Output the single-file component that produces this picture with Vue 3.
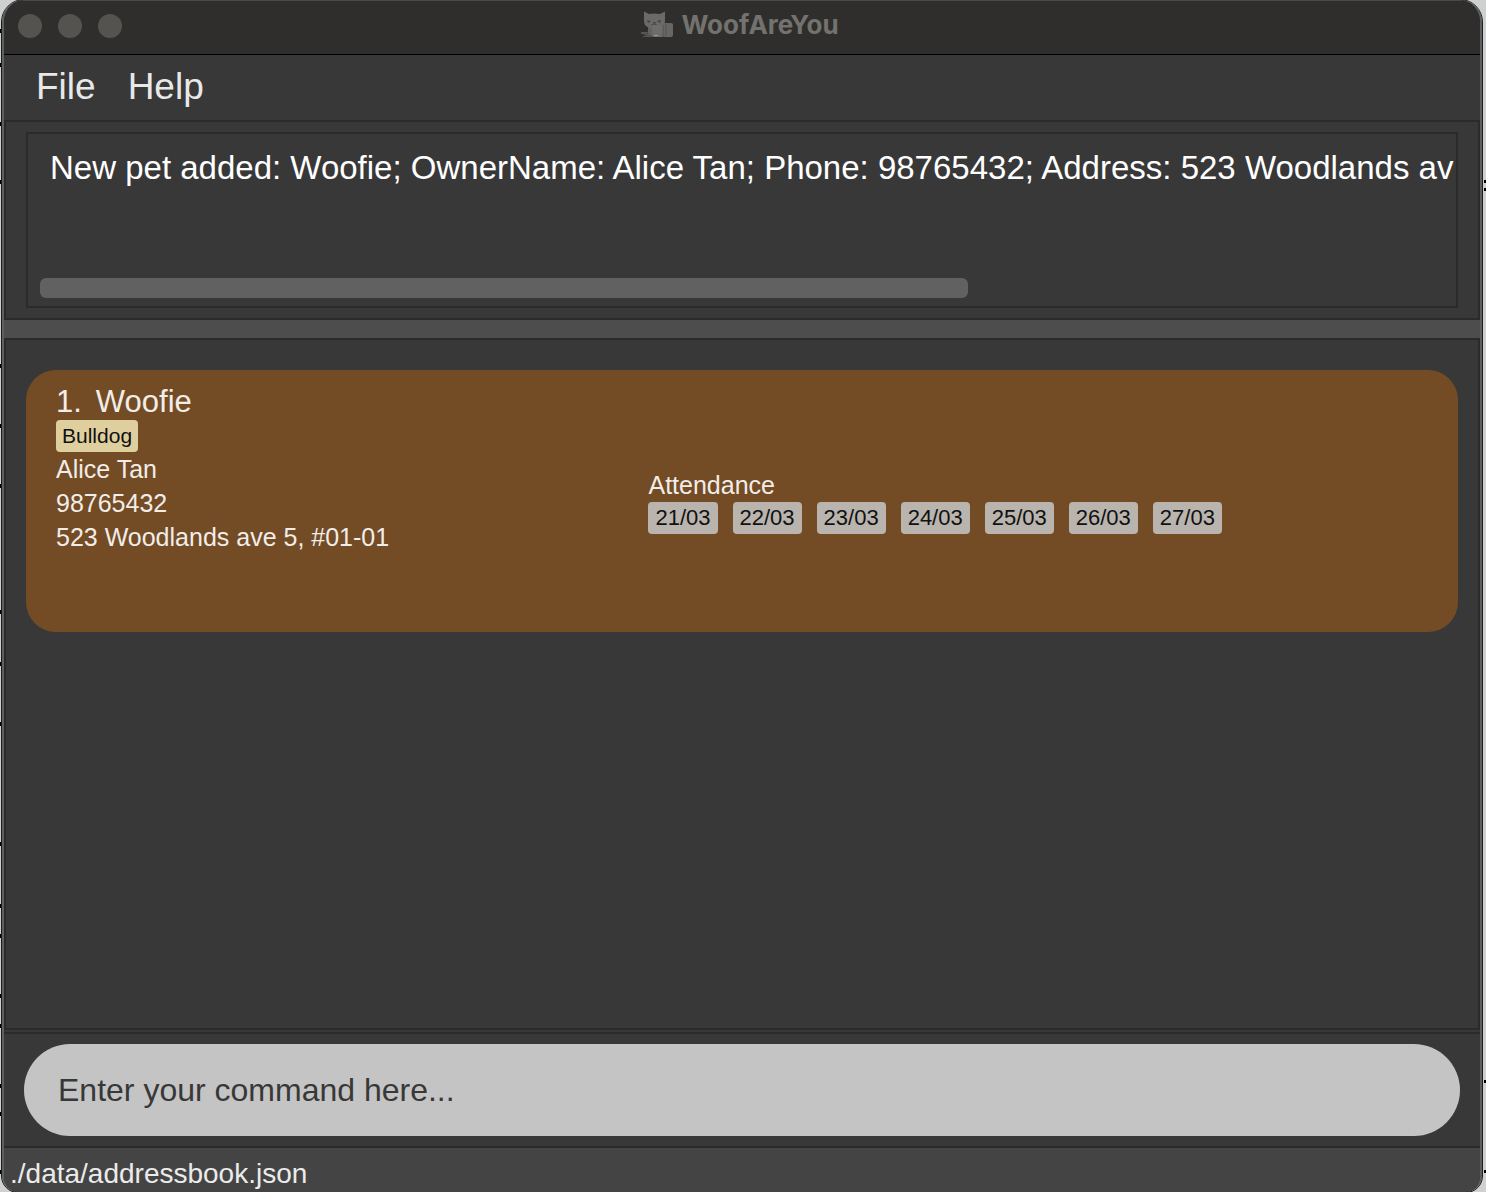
<script setup>
import { ref } from 'vue'

const message = 'New pet added: Woofie; OwnerName: Alice Tan; Phone: 98765432; Address: 523 Woodlands ave 5, #01-01'
const command = ref('')

const pet = {
  index: 1,
  name: 'Woofie',
  breed: 'Bulldog',
  owner: 'Alice Tan',
  phone: '98765432',
  address: '523 Woodlands ave 5, #01-01',
  attendance: ['21/03', '22/03', '23/03', '24/03', '25/03', '26/03', '27/03'],
}

const leftMarks = [29, 63, 122, 180, 364, 424, 484, 610, 662, 722, 842, 904, 934, 994, 1024, 1084, 1112, 1170]
const rightMarks = [180, 188, 1080, 1170]
</script>

<template>
  <div class="desktop">
    <svg class="edge edge-left" aria-hidden="true">
      <rect v-for="y in leftMarks" :key="y" x="0" :y="y" width="2" height="4" />
    </svg>
    <div class="window">
      <header class="titlebar">
        <div class="lights">
          <button type="button" aria-label="Close"></button>
          <button type="button" aria-label="Minimise"></button>
          <button type="button" aria-label="Zoom"></button>
        </div>
        <h1 class="title">
          <svg class="logo" viewBox="0 0 32 28" aria-hidden="true">
            <path d="M0 21h11v1h-6l7 2v2H2v-1h4l-4-2H0z" fill="#555452" />
            <path d="M7 12h14v12H9q-3-1-2-5z" fill="#62615f" />
            <path d="M3 1q0-1 1 0l4 2q5-1 11 0l4-2q1-1 1 0v9q0 6-7 7h-7q-7-1-7-7z" fill="#6b6a68" />
            <path d="M6 9l4 1-3 2zM20 9l-4 1 3 2zM12 11h3l-1 2h-1z" fill="#444341" />
            <path d="M10 14l3-1 3 1" stroke="#4c4b49" fill="none" />
            <rect x="11" y="14" width="12" height="12" rx="2" fill="#6e6d6b" />
            <rect x="22" y="12" width="10" height="14" rx="2" fill="#676664" />
            <path d="M22 14v11M25 13v12" stroke="#565553" fill="none" />
            <path d="M13 24h4v1h-4z" fill="#999" />
          </svg>
          <span>WoofAreYou</span>
        </h1>
      </header>

      <nav class="menubar">
        <button type="button">File</button>
        <button type="button">Help</button>
      </nav>

      <section class="result">
        <div class="result-box">
          <textarea class="message" aria-label="Command result" readonly wrap="off" :value="message"></textarea>
          <div class="track"><div class="thumb"></div></div>
        </div>
      </section>

      <div class="divider"></div>

      <main class="list">
        <article class="card">
          <div class="details">
            <h2><span>{{ pet.index }}.</span><span>{{ pet.name }}</span></h2>
            <span class="tag breed">{{ pet.breed }}</span>
            <p>{{ pet.owner }}</p>
            <p>{{ pet.phone }}</p>
            <p>{{ pet.address }}</p>
          </div>
          <div class="attendance">
            <p>Attendance</p>
            <div class="days">
              <span v-for="day in pet.attendance" :key="day" class="tag day">{{ day }}</span>
            </div>
          </div>
        </article>
      </main>

      <form class="command" @submit.prevent>
        <input v-model="command" type="text" aria-label="Command" placeholder="Enter your command here..." />
      </form>

      <footer class="status">./data/addressbook.json</footer>
    </div>
    <svg class="edge edge-right" aria-hidden="true">
      <rect v-for="y in rightMarks" :key="y" x="2" :y="y" width="2" height="3" />
    </svg>
  </div>
</template>

<style>
body {
  margin: 0;
}
</style>

<style scoped>
* {
  box-sizing: border-box;
}
.desktop {
  display: flex;
  min-height: 100vh;
  background: #cfd0d0;
  font-family: "Liberation Sans", Arial, sans-serif;
}
.edge {
  flex: none;
  align-self: stretch;
  height: auto;
}
.edge-left {
  width: 2px;
}
.edge-right {
  width: 4px;
}
.window {
  flex: 1;
  min-width: 0;
  display: flex;
  flex-direction: column;
  overflow: hidden;
  border: solid #5d6060;
  border-width: 0 2px;
  border-radius: 22px 22px 16px 16px;
  outline: 1px solid #1c1c1c;
  background: #383838;
}
.titlebar {
  display: grid;
  grid-template-columns: 1fr auto 1fr;
  align-items: start;
  height: 55px;
  padding: 0 18px 0 14px;
  border-top: 1px solid #4a4a48;
  border-bottom: 1px solid #000;
  background: #2f2e2c;
}
.lights {
  display: flex;
  gap: 16px;
  padding-top: 13px;
}
.lights button {
  width: 24px;
  height: 24px;
  padding: 0;
  border: 0;
  border-radius: 50%;
  background: #545350;
}
.title {
  display: flex;
  align-items: center;
  gap: 8px;
  height: 48px;
  margin: 0;
  font: 700 26px/48px Inter, sans-serif;
  color: #73726f;
}
.logo {
  width: 32px;
  height: 28px;
}
.menubar {
  display: flex;
  gap: 32px;
  height: 65px;
  padding: 0 32px;
}
.menubar button {
  padding: 0 0 2px;
  border: 0;
  background: none;
  font: 37px/60px "Liberation Sans", Arial, sans-serif;
  color: #e8e8e8;
}
.result {
  height: 200px;
  padding: 10px 20px;
  border: 2px solid #2a2a2a;
}
.result-box {
  display: flex;
  flex-direction: column;
  justify-content: space-between;
  height: 176px;
  padding: 10px 2px 8px 12px;
  border: 2px solid #2a2a2a;
}
.message {
  display: block;
  width: 100%;
  height: 48px;
  padding: 0 0 0 10px;
  border: 0;
  outline: 0;
  resize: none;
  overflow: hidden;
  background: none;
  font: 33px/48px "Liberation Sans", Arial, sans-serif;
  white-space: pre;
  color: #fff;
}
.track {
  padding-right: 8px;
}
.thumb {
  width: 66%;
  height: 20px;
  border-radius: 6px;
  background: #616161;
}
.divider {
  height: 18px;
  background: #4d4d4d;
}
.list {
  flex: 1;
  margin-bottom: 2px;
  padding: 30px 20px;
  border: 2px solid #2a2a2a;
}
.card {
  display: grid;
  grid-template-columns: 38fr 50fr;
  min-height: 262px;
  padding: 14px 30px;
  border-radius: 30px;
  background: #734c26;
  color: #f2ede8;
}
.card h2 {
  display: flex;
  gap: 14px;
  margin: 0;
  font-size: 31px;
  font-weight: 400;
  line-height: 36px;
}
.card p {
  margin: 0;
  font-size: 25px;
  line-height: 34px;
}
.attendance {
  align-self: center;
}
.tag {
  display: block;
  width: fit-content;
  padding: 0 6px;
  border-radius: 4px;
  font-size: 22px;
  line-height: 32px;
  color: #111;
}
.breed {
  font-size: 21px;
  background: #dfcf9f;
}
.days {
  display: flex;
  gap: 15px;
}
.day {
  padding: 0 7px;
  background: #b9b4ae;
}
.command {
  padding: 10px 20px;
  border-top: 2px solid #2a2a2a;
}
.command input {
  display: block;
  width: 100%;
  height: 92px;
  padding: 0 34px;
  border: 0;
  border-radius: 46px;
  outline: 0;
  background: #c4c4c4;
  font: 32px "Liberation Sans", Arial, sans-serif;
  color: #383838;
}
.command input::placeholder {
  color: #383838;
  opacity: 1;
}
.status {
  height: 46px;
  padding: 4px 6px 0;
  border-top: 2px solid #2a2a2a;
  background: #444;
  font-size: 28px;
  line-height: 44px;
  color: #ebebeb;
}
</style>
